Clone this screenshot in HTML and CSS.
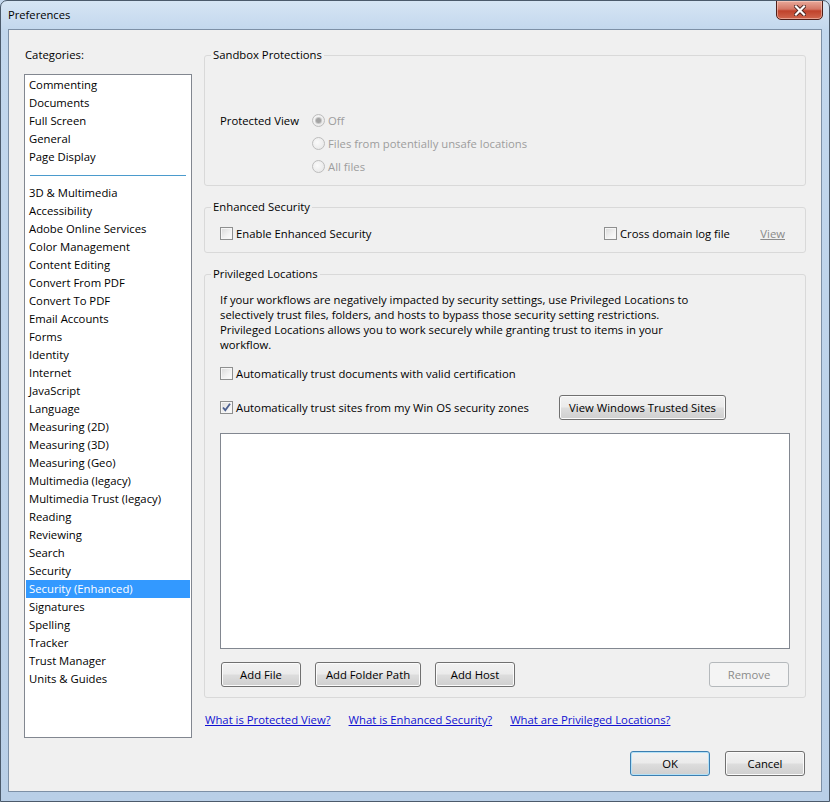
FILE: index.html
```html
<!DOCTYPE html>
<html lang="en">
<head>
    <meta charset="UTF-8">
    <title>Preferences</title>
    <link rel="stylesheet" href="styles.css">
</head>
<body>

<div class="window">
    <div class="titlebar">
        <span class="title">Preferences</span>
        <button class="close" title="Close">
            <svg width="12" height="11" viewBox="0 0 12 11">
                <path d="M2 1.5 L10 9.5 M10 1.5 L2 9.5" stroke="#4a2420" stroke-width="4" stroke-linecap="square"/>
                <path d="M2 1.5 L10 9.5 M10 1.5 L2 9.5" stroke="#fff" stroke-width="2.2" stroke-linecap="square"/>
            </svg>
        </button>
    </div>

    <div class="client">
        <!-- left: category list -->
        <div class="sidebar">
            <div class="cat-label">Categories:</div>
            <ul class="cat-list">
                <li>Commenting</li>
                <li>Documents</li>
                <li>Full Screen</li>
                <li>General</li>
                <li>Page Display</li>
                <li class="sep"><span></span></li>
                <li>3D &amp; Multimedia</li>
                <li>Accessibility</li>
                <li>Adobe Online Services</li>
                <li>Color Management</li>
                <li>Content Editing</li>
                <li>Convert From PDF</li>
                <li>Convert To PDF</li>
                <li>Email Accounts</li>
                <li>Forms</li>
                <li>Identity</li>
                <li>Internet</li>
                <li>JavaScript</li>
                <li>Language</li>
                <li>Measuring (2D)</li>
                <li>Measuring (3D)</li>
                <li>Measuring (Geo)</li>
                <li>Multimedia (legacy)</li>
                <li>Multimedia Trust (legacy)</li>
                <li>Reading</li>
                <li>Reviewing</li>
                <li>Search</li>
                <li>Security</li>
                <li class="selected">Security (Enhanced)</li>
                <li>Signatures</li>
                <li>Spelling</li>
                <li>Tracker</li>
                <li>Trust Manager</li>
                <li>Units &amp; Guides</li>
            </ul>
        </div>

        <!-- right: settings panel -->
        <div class="main">
            <fieldset class="group sandbox">
                <legend>Sandbox Protections</legend>
                <div class="pv">
                    <div class="pv-label">Protected View</div>
                    <div class="options">
                        <div class="option"><span class="radio on"></span>Off</div>
                        <div class="option"><span class="radio"></span>Files from potentially unsafe locations</div>
                        <div class="option"><span class="radio"></span>All files</div>
                    </div>
                </div>
            </fieldset>

            <fieldset class="group enhanced">
                <legend>Enhanced Security</legend>
                <div class="es-row">
                    <label class="check-row es-main"><span class="cb"></span>Enable Enhanced Security</label>
                    <label class="check-row"><span class="cb"></span>Cross domain log file</label>
                    <span class="view-link">View</span>
                </div>
            </fieldset>

            <fieldset class="group privileged">
                <legend>Privileged Locations</legend>
                <p class="info">
                    If your workflows are negatively impacted by security settings, use Privileged Locations to<br>
                    selectively trust files, folders, and hosts to bypass those security setting restrictions.<br>
                    Privileged Locations allows you to work securely while granting trust to items in your<br>
                    workflow.
                </p>
                <label class="check-row cert-row"><span class="cb"></span>Automatically trust documents with valid certification</label>
                <div class="zones-row">
                    <label class="check-row zones-label">
                        <span class="cb">
                            <svg width="11" height="11" viewBox="0 0 11 11">
                                <path d="M2 5.5 L4.3 8.2 L9 1.8" fill="none" stroke="#4b5f8f" stroke-width="1.8"/>
                            </svg>
                        </span>Automatically trust sites from my Win OS security zones
                    </label>
                    <button class="btn trusted-btn">View Windows Trusted Sites</button>
                </div>
                <div class="trust-list"></div>
                <div class="list-buttons">
                    <button class="btn add-file">Add File</button>
                    <button class="btn add-folder">Add Folder Path</button>
                    <button class="btn add-host">Add Host</button>
                    <button class="btn remove" disabled>Remove</button>
                </div>
            </fieldset>

            <div class="help-links">
                <a href="#">What is Protected View?</a>
                <a href="#">What is Enhanced Security?</a>
                <a href="#">What are Privileged Locations?</a>
            </div>

            <div class="footer">
                <button class="btn ok">OK</button>
                <button class="btn cancel">Cancel</button>
            </div>
        </div>
    </div>
</div>

</body>
</html>
```

FILE: styles.css
```css
* {
    box-sizing: border-box;
}

body {
    margin: 0;
    font-family: "Open Sans", "Noto Sans", sans-serif;
    font-size: 11.3px;
    color: #000;
    background: #c4d8ee;
}

/* window frame */
.window {
    width: 830px;
    height: 802px;
    border: 1px solid #4b5a6b;
    border-radius: 7px 7px 0 0;
    background: linear-gradient(to bottom, #d6e5f4 0, #c2d7ed 30px, #b9cfe7 100%);
    display: flex;
    flex-direction: column;
    overflow: hidden;
}

.titlebar {
    height: 28px;
    flex: none;
    display: flex;
    justify-content: space-between;
    padding: 0 6px 0 7px;
}

.title {
    line-height: 28px;
    font-size: 11.2px;
}

.close {
    width: 47px;
    height: 20px;
    margin-top: -1px;
    padding: 0;
    border: 1px solid #4f1f19;
    border-radius: 0 0 5px 5px;
    background: linear-gradient(to bottom, #e9a99a 0, #d47766 45%, #c0422b 55%, #d0674e 100%);
    box-shadow: inset 0 0 0 1px rgba(255, 220, 210, 0.5);
    display: flex;
    align-items: center;
    justify-content: center;
}

.client {
    flex: 1;
    margin: 0 7px 9px;
    border: 1px solid #7d90a6;
    background: #f0f0f0;
    display: flex;
    gap: 12px;
    padding: 17px 15px 0;
}

/* categories */
.sidebar {
    width: 168px;
    flex: none;
}

.cat-label {
    line-height: 16px;
    padding-left: 1px;
}

.cat-list {
    list-style: none;
    margin: 11px 0 0;
    padding: 1px;
    height: 664px;
    border: 1px solid #828790;
    background: #fff;
}

.cat-list li {
    height: 18px;
    line-height: 18px;
    padding-left: 3px;
    white-space: nowrap;
}

.cat-list li.selected {
    background: #3399ff;
    color: #fff;
}

.cat-list li.sep {
    padding-top: 9px;
}

.cat-list li.sep span {
    display: block;
    height: 1px;
    margin: 0 4px 0 1px;
    background: #4b9bcd;
}

/* settings panel */
.main {
    width: 602px;
    flex: none;
}

.group {
    margin: 0;
    padding: 0 15px;
    min-width: 0;
    border: 1px solid #d9d9d9;
    border-radius: 3px;
}

.group legend {
    padding: 0 2px;
    margin-left: -9px;
    line-height: 16px;
}

.sandbox {
    padding-top: 46px;
    padding-bottom: 7px;
}

.pv {
    display: flex;
}

.pv-label {
    width: 92px;
    line-height: 23px;
}

.option {
    height: 23px;
    display: flex;
    align-items: center;
    gap: 3px;
    color: #9d9d9d;
}

.radio {
    width: 13px;
    height: 13px;
    border: 1px solid #bdbdbd;
    border-radius: 50%;
    background: radial-gradient(circle at 40% 40%, #fafafa, #e4e4e4);
    display: flex;
    align-items: center;
    justify-content: center;
}

.radio.on::after {
    content: "";
    width: 5px;
    height: 5px;
    border-radius: 50%;
    background: #a3a3a3;
    box-shadow: 0 0 0 1px #c8c8c8;
}

.enhanced {
    margin-top: 13px;
    padding-top: 9px;
    padding-bottom: 10px;
}

.es-row {
    display: flex;
    align-items: center;
}

.check-row {
    height: 18px;
    display: flex;
    align-items: center;
    gap: 3px;
    white-space: nowrap;
}

.cb {
    width: 13px;
    height: 13px;
    flex: none;
    border: 1px solid #8e8f8f;
    background: linear-gradient(135deg, #d9d9d9 0, #f2f2f2 60%, #fdfdfd 100%);
    box-shadow: inset 0 0 0 1px #f6f6f6;
    display: flex;
    align-items: center;
    justify-content: center;
}

.es-main {
    width: 384px;
}

.view-link {
    margin-left: auto;
    margin-right: 5px;
    color: #8a8a8a;
    text-decoration: underline;
}

.privileged {
    margin-top: 13px;
    padding-top: 10px;
    padding-bottom: 10px;
}

.info {
    margin: 0;
    line-height: 15px;
}

.cert-row {
    margin-top: 12px;
}

.zones-row {
    margin-top: 13px;
    height: 25px;
    display: flex;
    align-items: center;
}

.zones-label {
    width: 339px;
}

.trust-list {
    margin-top: 13px;
    height: 216px;
    border: 1px solid #828790;
    background: #fff;
}

.list-buttons {
    margin-top: 13px;
    display: flex;
}

.btn {
    height: 25px;
    padding: 0;
    font-family: inherit;
    font-size: inherit;
    color: #000;
    border: 1px solid #707070;
    border-radius: 3px;
    background: linear-gradient(to bottom, #f2f2f2 0, #ebebeb 48%, #dddddd 52%, #cfcfcf 100%);
    box-shadow: inset 0 0 0 1px #fbfbfb;
}

.trusted-btn {
    width: 167px;
}

.add-file {
    width: 80px;
    margin-left: 1px;
}

.add-folder {
    width: 106px;
    margin-left: 14px;
}

.add-host {
    width: 80px;
    margin-left: 14px;
}

.remove {
    width: 80px;
    margin-left: auto;
    margin-right: 1px;
    color: #8b8b8b;
    border-color: #b5b9bc;
    background: #f4f4f4;
    box-shadow: none;
}

.help-links {
    margin-top: 14px;
    padding-left: 1px;
    display: flex;
    gap: 18px;
    line-height: 16px;
}

.help-links a {
    color: #1010d0;
    text-decoration: underline;
}

.footer {
    margin-top: 23px;
    padding-right: 1px;
    display: flex;
    justify-content: flex-end;
    gap: 15px;
}

.footer .btn {
    width: 80px;
}

.btn.ok {
    border-color: #3c7fb1;
    box-shadow: inset 0 0 0 1px #b4e1f7;
}
```
